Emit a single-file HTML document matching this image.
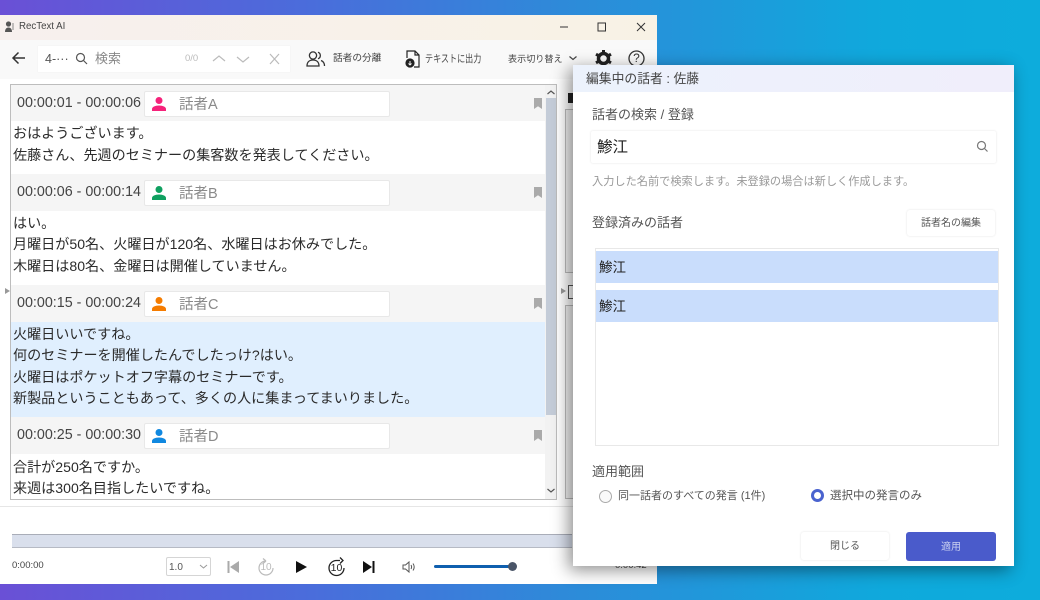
<!DOCTYPE html>
<html lang="ja"><head><meta charset="utf-8"><title>RecText AI</title>
<style>
*{box-sizing:border-box;margin:0;padding:0}
html,body{width:1040px;height:600px;overflow:hidden}
body{position:relative;font-family:"Liberation Sans","Noto Sans CJK JP",sans-serif;color:#333;background:linear-gradient(90deg,#6a50d6 0%,#4a6ddb 30%,#2d8bd9 55%,#0fa9dc 85%,#0dacdc 100%)}
.a{position:absolute;white-space:nowrap}
svg{position:absolute;overflow:visible}
.win{position:absolute;left:0;top:15px;width:657px;height:569px;background:#fff}
.row{position:absolute;left:11px;width:534px}
.hd{position:absolute;left:0;top:0;width:534px;height:37px;background:#f5f5f5}
.time{position:absolute;left:6px;top:9px;font-size:14.3px;color:#444;line-height:18px}
.sp{position:absolute;left:133px;top:6px;width:246px;height:26px;background:#fff;border:1px solid #e8e8e8;border-radius:2px}
.sp span{position:absolute;left:34px;top:3px;font-size:14.5px;color:#8a8a8a;line-height:20px}
.bm{position:absolute;left:523px;top:13px;width:8px;height:11px;background:#aaa;clip-path:polygon(0 0,100% 0,100% 100%,50% 75%,0 100%)}
.tx{position:absolute;left:2px;font-size:14.1px;line-height:21.5px;color:#2b2b2b;white-space:nowrap}
.dlg{position:absolute;left:573px;top:65px;width:441px;height:501px;background:#fff;box-shadow:-4px 4px 16px rgba(0,0,0,.45)}
.lb{font-size:13px;color:#555;line-height:18px}
.bt{position:absolute;background:#fff;border-radius:3px;box-shadow:0 0 2px rgba(0,0,0,.12);font-size:10px;color:#555;text-align:center}
.sx{transform-origin:0 50%}
</style></head><body>
<div class="win">
 <div class="a" style="left:0;top:0;width:657px;height:25px;background:linear-gradient(90deg,#f7f0ee,#f8f2e5)"></div>
 <div class="a" style="left:0;top:25px;width:657px;height:39px;background:#f9f9f9"></div>
 <div class="a" style="left:0;top:491px;width:657px;height:1px;background:#e6e6e6"></div>
 <div class="a" style="left:12px;top:519px;width:560px;height:14px;background:#d9dfec;border-top:1px solid #a9adb8;border-bottom:1px solid #b6bac4"></div>
</div>

<!-- title bar -->
<svg style="left:4px;top:21px" width="11" height="12" viewBox="0 0 11 12"><circle cx="4.500" cy="3" r="2.600" fill="#555"/><path d="M1 11c0-3 1.500-4.500 3.500-4.500S8 8 8 11z" fill="#555"/><path d="M9 2v7" stroke="#888" stroke-width="1"/></svg>
<div class="a" style="left:19px;top:20px;font-size:9.700px;line-height:14px;color:#444">RecText AI</div>
<svg style="left:560px;top:20px" width="90" height="14"><path d="M0 7h8" stroke="#333" stroke-width="1"/><rect x="38" y="3" width="7.500" height="8" fill="none" stroke="#333"/><path d="M77 3l8 8M85 3l-8 8" stroke="#333" stroke-width="1"/></svg>

<!-- toolbar -->
<svg style="left:11px;top:51px" width="15" height="14"><path d="M14 7H2M7.500 1.500L2 7l5.500 5.500" fill="none" stroke="#333" stroke-width="1.500"/></svg>
<div class="a" style="left:38px;top:46px;width:252px;height:26px;background:#fff;box-shadow:0 0 1px rgba(0,0,0,.08)"></div>
<div class="a" style="left:45px;top:50px;font-size:12.500px;line-height:18px;color:#555">4-···</div>
<svg style="left:75px;top:52px" width="13" height="13"><circle cx="5.500" cy="5.500" r="4" fill="none" stroke="#555" stroke-width="1.200"/><path d="M8.500 8.500l3.500 3.500" stroke="#555" stroke-width="1.200"/></svg>
<div class="a" style="left:95px;top:49px;font-size:13px;line-height:20px;color:#888">検索</div>
<div class="a" style="left:185px;top:52px;font-size:9.500px;line-height:14px;color:#bbb">0/0</div>
<svg style="left:212px;top:52px" width="76" height="14"><path d="M1 9l6-5 6 5M25 5l6 5 6-5" fill="none" stroke="#bbb" stroke-width="1.200"/><path d="M58 2l9 10M67 2l-9 10" stroke="#bbb" stroke-width="1.200"/></svg>
<svg style="left:306px;top:50px" width="20" height="18" viewBox="0 0 20 18" fill="none" stroke="#333" stroke-width="1.300"><circle cx="7" cy="5.500" r="3.600"/><path d="M1 16c0-4 2.500-6 6-6s6 2 6 6z"/><path d="M12 2.200a3.500 3.500 0 0 1 0 6.600M15 10.500c2.200.8 3.500 2.600 3.500 5.500"/></svg>
<div class="a" style="left:333px;top:51px;font-size:9.700px;line-height:16px;color:#444">話者の分離</div>
<svg style="left:405px;top:50px" width="16" height="18" viewBox="0 0 16 18" fill="none" stroke="#222" stroke-width="1.200"><path d="M2 8V1h8l4 4v12H9M10 1v4h4"/><circle cx="5" cy="13" r="4" fill="#222"/><path d="M5 11v3.500M3.500 13.500L5 15l1.500-1.500" stroke="#fff" stroke-width=".9"/></svg>
<div class="a sx" style="left:425px;top:51px;font-size:10.500px;line-height:16px;color:#444;transform:scaleX(.77)">テキストに出力</div>
<div class="a" style="left:508px;top:51px;font-size:9.100px;line-height:16px;color:#444">表示切り替え</div>
<svg style="left:568px;top:55px" width="9" height="7"><path d="M1.500 1.500l3.500 3 3.500-3" fill="none" stroke="#444" stroke-width="1.200"/></svg>
<svg style="left:595px;top:50px" width="17" height="17" viewBox="0 0 17 17"><circle cx="8.500" cy="8.500" r="5" fill="none" stroke="#222" stroke-width="3.500"/><path d="M8.500 0v3M8.500 14v3M1 4.200l2.600 1.500M13.400 11.300l2.600 1.500M1 12.800l2.600-1.500M13.400 5.700L16 4.200" stroke="#222" stroke-width="3"/></svg>
<svg style="left:628px;top:50px" width="17" height="17"><circle cx="8.500" cy="8.500" r="7.500" fill="none" stroke="#333" stroke-width="1.300"/></svg>
<div class="a" style="left:628px;top:50px;width:17px;text-align:center;font-size:12px;line-height:17px;color:#333">?</div>

<!-- list -->
<div class="a" style="left:10px;top:84px;width:547px;height:416px;background:#fff;border:1px solid #bdbdbd;overflow:hidden"></div>
<div class="row" style="top:85px;height:89px">
 <div class="hd" style="height:36px"></div><div class="time">00:00:01 - 00:00:06</div>
 <div class="sp"><svg style="left:6px;top:4px" width="16" height="16" fill="#f5227a"><circle cx="8" cy="4.500" r="3.500"/><path d="M1 15v-2c0-2 3-3.500 7-3.500s7 1.500 7 3.500v2z"/></svg><span>話者A</span></div><div class="bm"></div>
 <div class="tx" style="top:38px">おはようございます。<br>佐藤さん、先週のセミナーの集客数を発表してください。</div>
</div>
<div class="row" style="top:174px;height:111px">
 <div class="hd"></div><div class="time">00:00:06 - 00:00:14</div>
 <div class="sp"><svg style="left:6px;top:4px" width="16" height="16" fill="#0fa060"><circle cx="8" cy="4.500" r="3.500"/><path d="M1 15v-2c0-2 3-3.500 7-3.500s7 1.500 7 3.500v2z"/></svg><span>話者B</span></div><div class="bm"></div>
 <div class="tx" style="top:38.500px">はい。<br>月曜日が50名、火曜日が120名、水曜日はお休みでした。<br>木曜日は80名、金曜日は開催していません。</div>
</div>
<div class="row" style="top:285px;height:132px;background:#e0effe">
 <div class="hd"></div><div class="time">00:00:15 - 00:00:24</div>
 <div class="sp"><svg style="left:6px;top:4px" width="16" height="16" fill="#f57c00"><circle cx="8" cy="4.500" r="3.500"/><path d="M1 15v-2c0-2 3-3.500 7-3.500s7 1.500 7 3.500v2z"/></svg><span>話者C</span></div><div class="bm"></div>
 <div class="tx" style="top:38.500px">火曜日いいですね。<br>何のセミナーを開催したんでしたっけ?はい。<br>火曜日はポケットオフ字幕のセミナーです。<br>新製品ということもあって、多くの人に集まってまいりました。</div>
</div>
<div class="row" style="top:417px;height:82px;overflow:hidden">
 <div class="hd"></div><div class="time">00:00:25 - 00:00:30</div>
 <div class="sp"><svg style="left:6px;top:4px" width="16" height="16" fill="#1088e0"><circle cx="8" cy="4.500" r="3.500"/><path d="M1 15v-2c0-2 3-3.500 7-3.500s7 1.500 7 3.500v2z"/></svg><span>話者D</span></div><div class="bm"></div>
 <div class="tx" style="top:39.500px">合計が250名ですか。<br>来週は300名目指したいですね。</div>
</div>
<!-- scrollbar -->
<div class="a" style="left:545px;top:85px;width:11px;height:414px;background:#f2f2f2"></div>
<div class="a" style="left:546px;top:98px;width:10px;height:317px;background:#c4ccd8"></div>
<svg style="left:546px;top:88px" width="10" height="410"><path d="M1.500 6l3.500-3 3.500 3" fill="none" stroke="#555" stroke-width="1.200"/><path d="M1.500 401l3.500 3 3.500-3" fill="none" stroke="#555" stroke-width="1.200"/></svg>
<div class="a" style="left:5px;top:288px;width:0;height:0;border-left:5px solid #999;border-top:3.500px solid transparent;border-bottom:3.500px solid transparent"></div>
<div class="a" style="left:561px;top:288px;width:0;height:0;border-left:5px solid #999;border-top:3.500px solid transparent;border-bottom:3.500px solid transparent"></div>
<div class="a" style="left:565px;top:109px;width:8px;height:164px;background:#f3f3f3;border:1px solid #bdbdbd;border-right:0"></div>
<div class="a" style="left:565px;top:305px;width:8px;height:194px;background:#f3f3f3;border:1px solid #bdbdbd;border-right:0"></div>
<div class="a" style="left:568px;top:93px;width:5px;height:10px;background:#222"></div>
<div class="a" style="left:568px;top:285px;width:5px;height:14px;background:#fff;border:1px solid #555;border-right:0"></div>

<!-- player -->
<div class="a" style="left:12px;top:559px;font-size:9.500px;line-height:14px;color:#444">0:00:00</div>
<div class="a" style="left:166px;top:557px;width:45px;height:19px;background:#fff;border:1px solid #d5d5d5;border-radius:2px"></div>
<div class="a" style="left:169px;top:561px;font-size:10px;line-height:14px;color:#555">1.0</div>
<svg style="left:199px;top:564px" width="9" height="6"><path d="M1 1l3.500 3L8 1" fill="none" stroke="#999"/></svg>
<svg style="left:227px;top:560px" width="13" height="14"><path d="M1.500 1v12" stroke="#aaa" stroke-width="2"/><path d="M12 1v12L3 7z" fill="#aaa"/></svg>
<svg style="left:257px;top:557px" width="18" height="20" fill="none" stroke="#bbb" stroke-width="1.200"><path d="M9 4a7 7 0 1 1-7 7M9 4l3-2.500M9 4l3 2.500" transform="matrix(-1 0 0 1 18 0)"/></svg>
<div class="a" style="left:257px;top:561px;width:18px;text-align:center;font-size:10px;line-height:14px;color:#bbb">10</div>
<svg style="left:295px;top:560px" width="13" height="14"><path d="M1 1l11 6-11 6z" fill="#111"/></svg>
<svg style="left:327px;top:556px" width="19" height="21" fill="none" stroke="#222" stroke-width="1.300"><path d="M9.500 4.500a7.500 7.500 0 1 0 7.500 7.500M9.500 4.500H13M13 1.500l3 3-3 3"/></svg>
<div class="a" style="left:327px;top:561px;width:19px;text-align:center;font-size:10.500px;line-height:14px;color:#222">10</div>
<svg style="left:362px;top:560px" width="13" height="14"><path d="M1 1l9 6-9 6z" fill="#111"/><path d="M11.500 1v12" stroke="#111" stroke-width="2"/></svg>
<svg style="left:402px;top:560px" width="14" height="14" fill="none" stroke="#555" stroke-width="1"><path d="M1 5v4h2.500L7 12V2L3.500 5z"/><path d="M9 5c.8 1.300.8 2.700 0 4M11 3.500c1.500 2.200 1.500 4.800 0 7"/></svg>
<div class="a" style="left:434px;top:565px;width:78px;height:3px;background:#0f5fae;border-radius:2px"></div>
<div class="a" style="left:508px;top:562px;width:9px;height:9px;background:#4a5568;border-radius:50%"></div>
<div class="a" style="left:615px;top:559px;font-size:9.500px;line-height:14px;color:#444">0:00:42</div>

<!-- dialog -->
<div class="dlg">
 <div class="a" style="left:0;top:0;width:441px;height:27px;background:linear-gradient(90deg,#ecf2fc,#f0eefb)"></div>
 <div class="a" style="left:13px;top:6px;font-size:12.800px;line-height:16px;color:#444">編集中の話者 : 佐藤</div>
 <div class="a lb" style="left:19px;top:41px">話者の検索 / 登録</div>
 <div class="a" style="left:18px;top:66px;width:405px;height:32px;background:#fff;border-radius:2px;box-shadow:0 0 2px rgba(0,0,0,.12)"></div>
 <div class="a" style="left:24px;top:72px;font-size:15.500px;line-height:22px;color:#222">鯵江</div>
 <svg style="left:403px;top:75px" width="13" height="13" fill="none" stroke="#777" stroke-width="1.200"><circle cx="5.500" cy="5.500" r="4"/><path d="M8.500 8.500l3 3"/></svg>
 <div class="a" style="left:19px;top:110px;font-size:11.200px;line-height:15px;color:#999">入力した名前で検索します。未登録の場合は新しく作成します。</div>
 <div class="a lb" style="left:19px;top:149px">登録済みの話者</div>
 <div class="bt" style="left:334px;top:145px;width:88px;height:26px;line-height:28px">話者名の編集</div>
 <div class="a" style="left:22px;top:183px;width:404px;height:198px;background:#fff;border:1px solid #e8e8e8"></div>
 <div class="a" style="left:23px;top:186px;width:402px;height:32px;background:#c9ddfc"></div>
 <div class="a" style="left:23px;top:225px;width:402px;height:32px;background:#c9ddfc"></div>
 <div class="a" style="left:26px;top:193px;font-size:13.500px;line-height:20px;color:#222">鯵江</div>
 <div class="a" style="left:26px;top:232px;font-size:13.500px;line-height:20px;color:#222">鯵江</div>
 <div class="a lb" style="left:19px;top:398px">適用範囲</div>
 <div class="a" style="left:26px;top:425px;width:13px;height:13px;border:1px solid #aaa;border-radius:50%;background:#fafafa"></div>
 <div class="a" style="left:45px;top:423px;font-size:11px;line-height:16px;color:#555">同一話者のすべての発言 (1件)</div>
 <div class="a" style="left:238px;top:424px;width:13px;height:13px;border:3.500px solid #4a63cf;border-radius:50%;background:#fff"></div>
 <div class="a" style="left:257px;top:423px;font-size:11.500px;line-height:16px;color:#555">選択中の発言のみ</div>
 <div class="bt" style="left:228px;top:467px;width:88px;height:28px;line-height:29px">閉じる</div>
 <div class="bt" style="left:333px;top:467px;width:90px;height:29px;line-height:31px;background:#4a5bcb;color:#c9cff0;box-shadow:none">適用</div>
</div>
</body></html>
